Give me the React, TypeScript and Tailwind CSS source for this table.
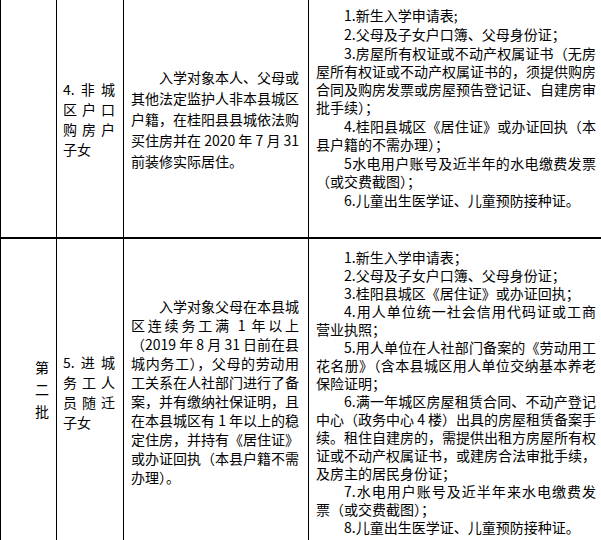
type Para = string[];

const row1Docs: Para[] = [
  ["1.新生入学申请表;"],
  ["2.父母及子女户口簿、父母身份证；"],
  [
    "3.房屋所有权证或不动产权属证书（无房",
    "屋所有权证或不动产权属证书的，须提供购房",
    "合同及购房发票或房屋预告登记证、自建房审",
    "批手续）；",
  ],
  ["4.桂阳县城区《居住证》或办证回执（本", "县户籍的不需办理）；"],
  ["5水电用户账号及近半年的水电缴费发票", "（或交费截图）；"],
  ["6.儿童出生医学证、儿童预防接种证。"],
];

const row2Docs: Para[] = [
  ["1.新生入学申请表；"],
  ["2.父母及子女户口簿、父母身份证；"],
  ["3.桂阳县城区《居住证》或办证回执；"],
  ["4.用人单位统一社会信用代码证或工商", "营业执照；"],
  [
    "5.用人单位在人社部门备案的《劳动用工",
    "花名册》（含本县城区用人单位交纳基本养老",
    "保险证明；",
  ],
  [
    "6.满一年城区房屋租赁合同、不动产登记",
    "中心（政务中心 4 楼）出具的房屋租赁备案手",
    "续。租住自建房的，需提供出租方房屋所有权",
    "证或不动产权属证书，或建房合法审批手续，",
    "及房主的居民身份证；",
  ],
  ["7.水电用户账号及近半年来水电缴费发", "票（或交费截图）；"],
  ["8.儿童出生医学证、儿童预防接种证。"],
];

const row1Desc: string[] = [
  "入学对象本人、父母或",
  "其他法定监护人非本县城区",
  "户籍，在桂阳县县城依法购",
  "买住房并在 2020 年 7 月 31",
  "前装修实际居住。",
];

const row2Desc: string[] = [
  "入学对象父母在本县城",
  "区连续务工满 1 年以上",
  "（2019 年 8 月 31 日前在县",
  "城内务工），父母的劳动用",
  "工关系在人社部门进行了备",
  "案，并有缴纳社保证明，且",
  "在本县城区有 1 年以上的稳",
  "定住房，并持有《居住证》",
  "或办证回执（本县户籍不需",
  "办理）。",
];

function Paragraph({ lines, className = "" }: { lines: string[]; className?: string }) {
  return (
    <div className={className}>
      {lines.map((line, i) => (
        <div
          key={i}
          className={
            "whitespace-nowrap " +
            (i === 0 ? "pl-[28px] " : "") +
            (i < lines.length - 1 ? "text-justify [text-align-last:justify]" : "text-left")
          }
        >
          {line}
        </div>
      ))}
    </div>
  );
}

function Category({ lines }: { lines: string[][] }) {
  return (
    <div className="w-[52px] leading-[20px]">
      {lines.map((chars, i) => (
        <div key={i} className={chars.length > 2 ? "flex justify-between" : "flex"}>
          {chars.map((c) => (
            <span key={c}>{c}</span>
          ))}
        </div>
      ))}
    </div>
  );
}

export default function App() {
  return (
    <div
      className="w-[601px] h-[540px] overflow-hidden bg-white text-black text-[14px]"
      style={{ fontFamily: '"Noto Sans CJK SC", "Noto Sans", sans-serif' }}
    >
      {/* row 4 */}
      <div className="flex h-[239px] border-b-2 border-black">
        <div className="w-[57px] border-x border-black" />
        <div className="w-[67px] border-r border-black flex items-center pl-[6px]">
          <Category lines={[["4.", "非", "城"], ["区", "户", "口"], ["购", "房", "户"], ["子", "女"]]} />
        </div>
        <div className="w-[185px] border-r border-black flex items-center pl-[7px] pt-[2px]">
          <Paragraph lines={row1Desc} className="w-[168px] leading-[21px]" />
        </div>
        <div className="flex-1 pl-[7px] pt-[6px]">
          <div className="w-[280px] leading-[18px] flex flex-col gap-[1px]">
            {row1Docs.map((p, i) => (
              <Paragraph key={i} lines={p} />
            ))}
          </div>
        </div>
      </div>

      {/* row 5 */}
      <div className="flex h-[305px]">
        <div className="w-[57px] border-x border-black flex items-center pl-[34px]">
          <div className="flex flex-col leading-[22px] pb-[6px]">
            <span>第</span>
            <span>二</span>
            <span>批</span>
          </div>
        </div>
        <div className="w-[67px] border-r border-black flex items-center pl-[6px]">
          <Category lines={[["5.", "进", "城"], ["务", "工", "人"], ["员", "随", "迁"], ["子", "女"]]} />
        </div>
        <div className="w-[185px] border-r border-black flex items-center pl-[7px]">
          <Paragraph lines={row2Desc} className="w-[168px] leading-[19px]" />
        </div>
        <div className="flex-1 pl-[7px] flex items-center">
          <div className="w-[280px] leading-[18px]">
            {row2Docs.map((p, i) => (
              <Paragraph key={i} lines={p} />
            ))}
          </div>
        </div>
      </div>
    </div>
  );
}
